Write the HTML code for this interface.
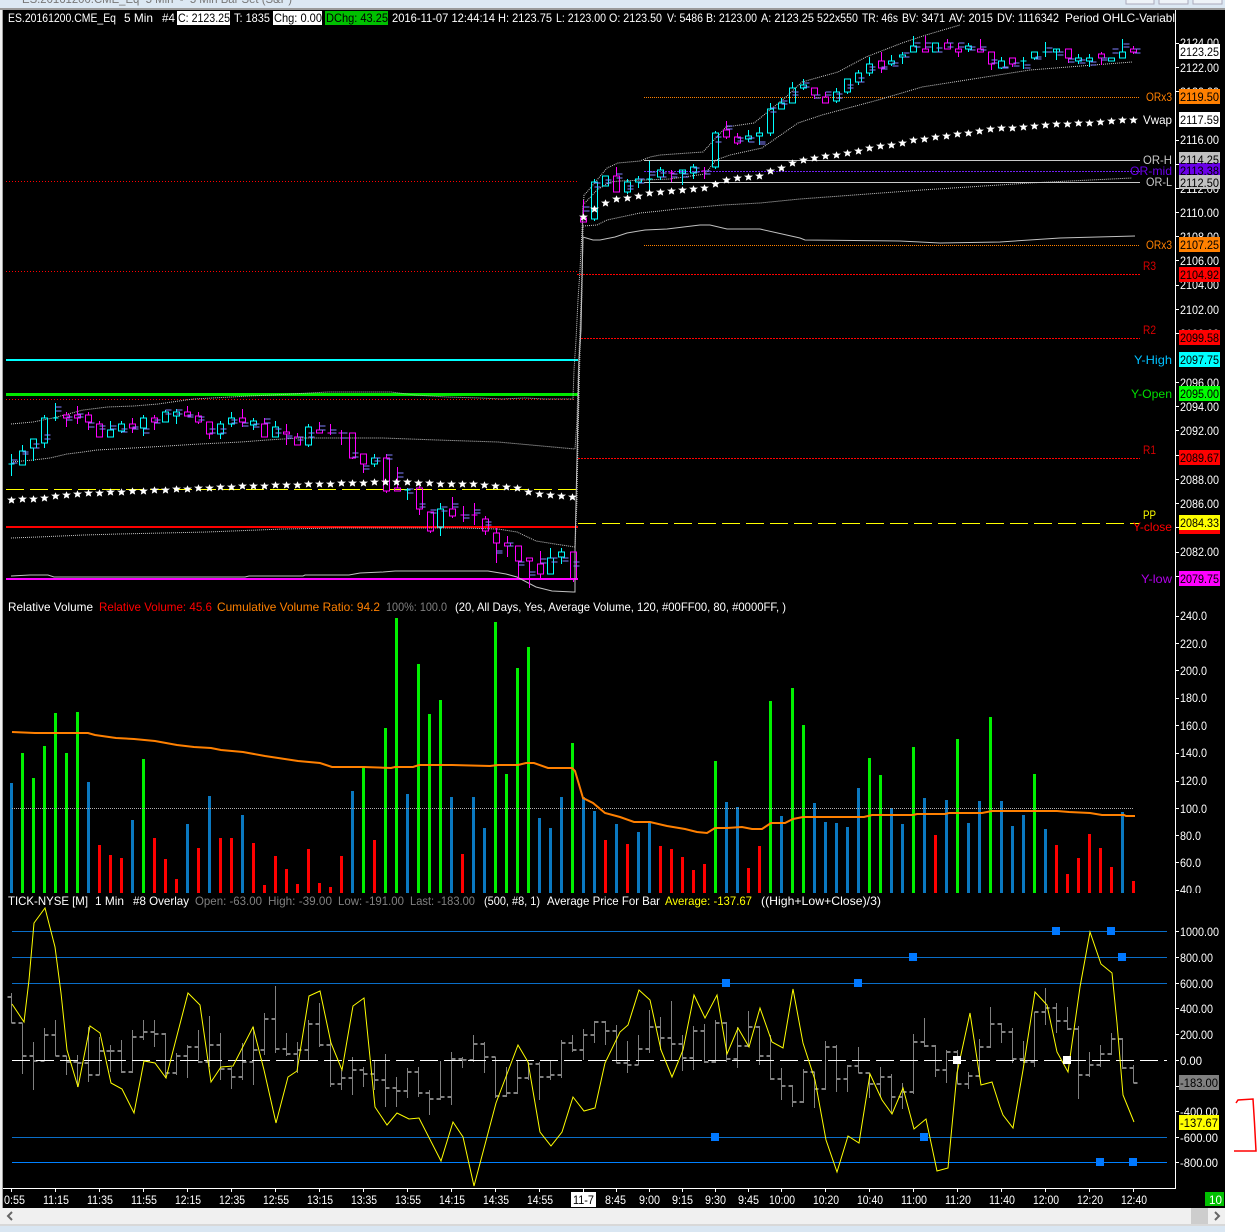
<!DOCTYPE html>
<html><head><meta charset="utf-8"><title>ES chart</title>
<style>
html,body{margin:0;padding:0;background:#fff;width:1257px;height:1232px;overflow:hidden}
svg{display:block}
text{font-family:"Liberation Sans",sans-serif;font-size:12px;fill:#fff;white-space:pre}
.k text,text.k{fill:#000}
</style></head><body>
<svg width="1257" height="1232" viewBox="0 0 1257 1232" xmlns="http://www.w3.org/2000/svg">
<defs>
<marker id="s" markerUnits="userSpaceOnUse" markerWidth="9" markerHeight="9" refX="5" refY="5" viewBox="0 0 10 10"><path fill="#fff" d="M5 .8L6.200 3.500H10L7.200 5.600L8 9L5 7.300L2 9L2.800 5.600L0 3.500H3.800Z"/></marker>
</defs>
<rect width="1257" height="1232" fill="#fff"/>
<!-- chrome -->
<rect width="1225" height="8" fill="#dce8f3"/>
<rect y="8" width="1225" height="2" fill="#9a9a9a"/>
<text x="22" y="3" style="fill:#777" textLength="270" lengthAdjust="spacingAndGlyphs">ES.20161200.CME_Eq  5 Min  -  5 Min Bar Set (S&amp;P)</text>
<g fill="#eef3f8" stroke="#aab"><rect x="1126" y="-3" width="28" height="7"/><rect x="1159" y="-3" width="29" height="7"/><rect x="1193" y="-3" width="29" height="7"/></g>
<rect x="0" y="10" width="2" height="1198" fill="#f0f0f0"/>
<rect x="2" y="10" width="1" height="1198" fill="#a0a0a0"/>
<rect x="3" y="10" width="1222" height="1198" fill="#000"/>
<rect y="1208" width="1225" height="16" fill="#f0f0f0"/>
<rect y="1224" width="1225" height="2" fill="#d8d8d8"/>
<rect y="1226" width="1225" height="6" fill="#d9e6f2"/>
<rect x="1191" y="1208" width="17" height="16" fill="#cdcdcd"/>
<path d="M12 1212L8 1216L12 1220M1215 1212L1219 1216L1215 1220" fill="none" stroke="#666" stroke-width="2"/>
<path d="M1236 1103L1238 1100L1253 1099L1254.500 1123L1256 1151H1234" fill="none" stroke="#f00" stroke-width="1.500"/>

<!-- header -->
<rect x="177" y="11" width="53" height="14" fill="#fff"/>
<rect x="273" y="11" width="49" height="14" fill="#fff"/>
<rect x="325" y="11" width="63" height="14" fill="#00c000"/>
<text x="8" y="22" textLength="108" lengthAdjust="spacingAndGlyphs">ES.20161200.CME_Eq</text>
<text x="124" y="22" textLength="29" lengthAdjust="spacingAndGlyphs">5 Min</text>
<text x="162" y="22" textLength="13" lengthAdjust="spacingAndGlyphs">#4</text>
<text class="k" x="178" y="22" textLength="52" lengthAdjust="spacingAndGlyphs">C: 2123.25</text>
<text x="234" y="22" textLength="36" lengthAdjust="spacingAndGlyphs">T: 1835</text>
<text class="k" x="274" y="22" textLength="48" lengthAdjust="spacingAndGlyphs">Chg: 0.00</text>
<text class="k" x="326" y="22" textLength="62" lengthAdjust="spacingAndGlyphs">DChg: 43.25</text>
<text x="392" y="22" textLength="103" lengthAdjust="spacingAndGlyphs">2016-11-07 12:44:14</text>
<text x="498" y="22" textLength="54" lengthAdjust="spacingAndGlyphs">H: 2123.75</text>
<text x="556" y="22" textLength="50" lengthAdjust="spacingAndGlyphs">L: 2123.00</text>
<text x="609" y="22" textLength="53" lengthAdjust="spacingAndGlyphs">O: 2123.50</text>
<text x="667" y="22" textLength="36" lengthAdjust="spacingAndGlyphs">V: 5486</text>
<text x="706" y="22" textLength="51" lengthAdjust="spacingAndGlyphs">B: 2123.00</text>
<text x="761" y="22" textLength="53" lengthAdjust="spacingAndGlyphs">A: 2123.25</text>
<text x="817" y="22" textLength="41" lengthAdjust="spacingAndGlyphs">522x550</text>
<text x="862" y="22" textLength="36" lengthAdjust="spacingAndGlyphs">TR: 46s</text>
<text x="902" y="22" textLength="43" lengthAdjust="spacingAndGlyphs">BV: 3471</text>
<text x="949" y="22" textLength="44" lengthAdjust="spacingAndGlyphs">AV: 2015</text>
<text x="997" y="22" textLength="62" lengthAdjust="spacingAndGlyphs">DV: 1116342</text>
<text x="1065" y="22" textLength="110" lengthAdjust="spacingAndGlyphs">Period OHLC-Variabl</text>

<!-- level lines -->
<g fill="none">
<path stroke="#f00" stroke-dasharray="1 2" d="M6 181.500H577M6 271.500H577M6 399.500H575"/>
<path stroke="#f00" stroke-dasharray="2 1" d="M577 274.500H1140M581 338.500H1140M578 458.500H1140"/>
<path stroke="#ff8000" stroke-dasharray="1 1" d="M644 97.500H1140M644 245.500H1140"/>
<path stroke="#7020f0" stroke-dasharray="2 1" d="M644 171.500H1140"/>
<path stroke="#c8c8c8" d="M644 160.500H1140M644 182.500H1140"/>
<path stroke="#00ffff" stroke-width="2" d="M6 360H578"/>
<path stroke="#00e800" stroke-width="3" d="M6 394.500H578"/>
<path stroke="#f00" stroke-width="2" d="M6 527H578"/>
<path stroke="#ff00ff" stroke-width="2" d="M6 579H578"/>
<path stroke="#ffff00" stroke-dasharray="18 6" d="M6 489.500H576M578 523.500H1140"/>
<!-- bands -->
<g stroke="#c8c8c8" stroke-dasharray="1 1">
<polyline points="11,424 33,422 53,418 83,410 107,407 134,406 158,404 186,400 194,399 249,396 273,395 328,392 391,392 415,395 447,397 480,398 502,399 525,398 545,399 573,399 574,370 576,340 578,300 580,270 582,230 584,195 587,192 597,180 607,168 618,163 640,161 650,157 660,155 703,152 714,140 726,127 754,123 770,110 786,97 802,82 838,72 866,57 902,43 926,35 960,25"/>
<polyline points="11,462 33,460 50,458 67,454 83,452 97,450 133,448 150,447 167,446 200,444 241,442 267,440 300,438 314,438 383,438 437,440 498,442 575,449 577,420 578,380 580,330 582,270 583,205 597,190 610,182 620,181 645,180 670,179 705,174 716,160 730,155 762,148 798,123 822,115 878,100 922,87 1030,70 1132,62"/>
<polyline points="11,538 38,537 84,535 119,534 207,532 283,529 337,528 421,528 460,528 498,529 517,532 536,541 555,544 575,547 577,500 578,440 580,350 582,290 583,226 597,225 607,220 640,213 660,211 677,209 723,205 760,203 800,199 922,190 1030,183 1070,181 1132,178"/>
</g>
<polyline stroke="#c0c0c0" points="11,576 30,575 48,575 54,577 245,577 249,576 303,576 305,575 349,575 360,573 383,572 395,571 488,571 506,574 517,577 536,587 552,591 573,592 575,592 575,550 578,410 579,360 581,330 582,280 583,237 593,240 600,240 615,237 627,233 645,230 667,229 700,225 710,225 727,229 760,229 800,238 805,240 900,241 940,243 1000,242 1060,238 1135,236"/>
</g>

<!-- candles -->
<g fill="none" shape-rendering="crispEdges">
<path stroke="#00ffff" d="M11.500 454V476M8.500 464h6M22.500 445V451M19.500 451h6V465h-6zM30.500 439h6V448h-6zM33.500 448V461M44.500 415V418M41.500 418h6V443h-6zM44.500 443V448M55.500 403V421M52.500 418h6M110.500 421V430M107.500 430h6V437h-6zM121.500 421V424M118.500 424h6V431h-6zM121.500 431V433M143.500 415V418M140.500 418h6V428h-6zM143.500 428V436M165.500 410V412M162.500 412h6V422h-6zM176.500 409V412M173.500 412h6V416h-6zM176.500 416V424M220.500 421V424M217.500 424h6V434h-6zM220.500 434V439M231.500 412V418M228.500 418h6V424h-6zM231.500 424V427M253.500 418V421M250.500 421h6V425h-6zM253.500 425V430M275.500 421V427M272.500 427h6V437h-6zM308.500 424V427M305.500 427h6V445h-6zM308.500 445V447M374.500 454V458M371.500 458h6V464h-6zM374.500 464V467M407.500 488V500M404.500 490h6M440.500 503V509M437.500 509h6V527h-6zM440.500 527V536M550.500 548V558M547.500 558h6V574h-6zM561.500 548V552M558.500 552h6V557h-6zM561.500 557V564M594.500 179V182M591.500 182h6V219h-6zM594.500 219V221M602.500 176h6V186h-6zM627.500 179V182M624.500 182h6V192h-6zM627.500 192V194M638.500 176V179M635.500 179h6V182h-6zM638.500 182V188M649.500 161V191M646.500 179h6M660.500 167V170M657.500 170h6V177h-6zM660.500 177V180M682.500 170V185M679.500 170h6V173h-6zM693.500 164V167M690.500 167h6V173h-6zM693.500 173V179M715.500 131V133M712.500 133h6V167h-6zM715.500 167V169M748.500 130V136M745.500 136h6V139h-6zM748.500 139V142M759.500 127V133M756.500 133h6V136h-6zM759.500 136V145M770.500 103V109M767.500 109h6V133h-6zM770.500 133V136M781.500 98V103M778.500 103h6V109h-6zM792.500 82V88M789.500 88h6V103h-6zM803.500 79V85M800.500 85h6V88h-6zM803.500 88V90M836.500 88V92M833.500 92h6V101h-6zM836.500 101V103M844.500 79h6V92h-6zM847.500 92V94M858.500 70V73M855.500 73h6V82h-6zM858.500 82V85M869.500 57V64M866.500 64h6V73h-6zM869.500 73V76M891.500 55V61M888.500 61h6V64h-6zM891.500 64V66M902.500 52V55M899.500 55h6V57h-6zM902.500 57V64M913.500 36V46M910.500 46h6V52h-6zM932.500 43h6V52h-6zM968.500 43V46M965.500 46h6V49h-6zM968.500 49V52M1001.500 57V61M998.500 61h6V68h-6zM1001.500 68V69M1023.500 57V69M1020.500 61h6M1031.500 52h6V58h-6zM1034.500 58V60M1045.500 42V57M1042.500 52h6M1056.500 49V60M1053.500 49h6V52h-6zM1078.500 54V58M1075.500 58h6V61h-6zM1078.500 61V64M1089.500 54V58M1086.500 58h6V61h-6zM1089.500 61V67M1108.500 58h6V61h-6zM1122.500 39V52M1119.500 52h6V58h-6z"/>
<path stroke="#ff00ff" d="M66.500 412V415M63.500 415h6V418h-6zM66.500 418V427M77.500 406V415M74.500 415h6V418h-6zM77.500 418V424M88.500 412V415M85.500 415h6V422h-6zM88.500 422V430M99.500 421V424M96.500 424h6V437h-6zM132.500 418V424M129.500 424h6V428h-6zM132.500 428V433M154.500 415V418M151.500 418h6V422h-6zM154.500 422V430M187.500 406V412M184.500 412h6V416h-6zM198.500 412V416M195.500 416h6V422h-6zM198.500 422V424M206.500 422h6V434h-6zM209.500 434V439M242.500 409V418M239.500 418h6V422h-6zM242.500 422V427M264.500 418V424M261.500 424h6V437h-6zM286.500 424V432M283.500 432h6V434h-6zM286.500 434V445M297.500 433V437M294.500 437h6V445h-6zM319.500 422V430M316.500 430h6V433h-6zM330.500 424V435M327.500 433h6M341.500 430V445M338.500 433h6M349.500 433h6V458h-6zM352.500 458V459M360.500 454h6V464h-6zM363.500 464V473M386.500 454V458M383.500 458h6V491h-6zM386.500 491V493M397.500 467V488M394.500 488h6V491h-6zM419.500 486V488M416.500 488h6V509h-6zM419.500 509V515M427.500 512h6V531h-6zM430.500 531V533M452.500 497V509M449.500 509h6V516h-6zM452.500 516V518M463.500 506V522M460.500 515h6M474.500 503V525M471.500 515h6M485.500 516V519M482.500 519h6V531h-6zM485.500 531V535M496.500 528V533M493.500 533h6V543h-6zM496.500 543V563M507.500 536V543M504.500 543h6V546h-6zM507.500 546V557M515.500 546h6V561h-6zM518.500 561V578M526.500 558h6V561h-6zM529.500 561V588M540.500 551V564M537.500 564h6V574h-6zM540.500 574V578M570.500 552h6V579h-6zM573.500 579V582M583.500 200V218M580.500 218h6V222h-6zM613.500 176h6V192h-6zM616.500 167V176M671.500 170V182M668.500 173h6M704.500 167V179M701.500 171h6M726.500 121V130M723.500 130h6V137h-6zM726.500 137V139M737.500 133V137M734.500 137h6V143h-6zM737.500 143V145M811.500 88h6V95h-6zM814.500 95V99M825.500 92V97M822.500 97h6V103h-6zM878.500 61h6V68h-6zM881.500 52V61M881.500 68V73M922.500 49h6V52h-6zM925.500 36V49M944.500 43h6V49h-6zM947.500 39V43M955.500 49h6V52h-6zM958.500 43V49M958.500 52V57M977.500 49h6V52h-6zM980.500 39V49M988.500 52h6V64h-6zM991.500 64V70M1009.500 58h6V64h-6zM1012.500 64V67M1065.500 49h6V58h-6zM1068.500 58V63M1098.500 54h6V58h-6zM1101.500 52V54M1101.500 58V65M1130.500 49h6V52h-6zM1133.500 46V49M1133.500 52V54"/>
<path stroke="#8080ff" d="M11.500 460h6M11.500 463h6M22.500 452h6M22.500 454h6M33.500 444h6M33.500 448h6M44.500 435h6M44.500 439h6M55.500 407h6M55.500 411h6M66.500 417h6M66.500 420h6M77.500 414h6M77.500 417h6M88.500 423h6M88.500 427h6M99.500 426h6M99.500 429h6M110.500 426h6M110.500 429h6M121.500 429h6M121.500 432h6M132.500 427h6M132.500 429h6M143.500 429h6M143.500 433h6M154.500 420h6M154.500 423h6M165.500 410h6M165.500 414h6M176.500 410h6M176.500 414h6M187.500 415h6M187.500 417h6M198.500 417h6M198.500 420h6M209.500 429h6M209.500 433h6M220.500 429h6M220.500 433h6M231.500 420h6M231.500 423h6M242.500 423h6M242.500 426h6M253.500 424h6M253.500 427h6M264.500 419h6M264.500 423h6M275.500 429h6M275.500 433h6M286.500 436h6M286.500 438h6M297.500 437h6M297.500 440h6M308.500 433h6M308.500 437h6M319.500 426h6M319.500 430h6M330.500 430h6M330.500 433h6M341.500 433h6M341.500 438h6M352.500 453h6M352.500 457h6M363.500 466h6M363.500 469h6M374.500 458h6M374.500 461h6M386.500 455h6M386.500 459h6M397.500 473h6M397.500 477h6M407.500 489h6M407.500 493h6M419.500 504h6M419.500 507h6M430.500 510h6M430.500 513h6M441.500 507h6M441.500 511h6M452.500 504h6M452.500 507h6M463.500 515h6M463.500 518h6M474.500 510h6M474.500 513h6M485.500 522h6M485.500 525h6M496.500 551h6M496.500 553h6M507.500 543h6M507.500 546h6M518.500 562h6M518.500 565h6M529.500 572h6M529.500 575h6M540.500 559h6M540.500 563h6M551.500 558h6M551.500 562h6M562.500 558h6M562.500 561h6M573.500 562h6M573.500 566h6M583.500 207h6M583.500 211h6M594.500 183h6M594.500 187h6M605.500 180h6M605.500 183h6M616.500 174h6M616.500 178h6M627.500 186h6M627.500 189h6M638.500 179h6M638.500 183h6M649.500 172h6M649.500 175h6M660.500 173h6M660.500 177h6M671.500 174h6M671.500 177h6M682.500 174h6M682.500 177h6M693.500 168h6M693.500 172h6M704.500 171h6M704.500 174h6M715.500 137h6M715.500 142h6M726.500 126h6M726.500 129h6M737.500 138h6M737.500 141h6M748.500 138h6M748.500 142h6M759.500 142h6M759.500 144h6M770.500 108h6M770.500 112h6M781.500 101h6M781.500 104h6M792.500 92h6M792.500 95h6M803.500 83h6M803.500 87h6M814.500 95h6M814.500 98h6M825.500 92h6M825.500 95h6M836.500 94h6M836.500 98h6M847.500 85h6M847.500 88h6M858.500 78h6M858.500 82h6M869.500 67h6M869.500 70h6M881.500 67h6M881.500 69h6M892.500 63h6M892.500 66h6M903.500 53h6M903.500 57h6M914.500 43h6M914.500 47h6M925.500 43h6M925.500 47h6M936.500 48h6M936.500 52h6M947.500 43h6M947.500 47h6M958.500 43h6M958.500 47h6M969.500 47h6M969.500 50h6M980.500 47h6M980.500 50h6M991.500 60h6M991.500 63h6M1002.500 67h6M1002.500 68h6M1013.500 63h6M1013.500 66h6M1024.500 65h6M1024.500 68h6M1035.500 57h6M1035.500 59h6M1046.500 48h6M1046.500 52h6M1057.500 52h6M1057.500 55h6M1068.500 59h6M1068.500 62h6M1079.500 60h6M1079.500 63h6M1090.500 62h6M1090.500 65h6M1101.500 58h6M1101.500 60h6M1112.500 49h6M1112.500 53h6M1123.500 44h6M1123.500 47h6M1134.500 49h6M1134.500 53h6"/>
</g>
<!-- vwap stars -->
<polyline fill="none" marker-start="url(#s)" marker-mid="url(#s)" marker-end="url(#s)" points="11.500,500 22.500,499 33.500,499 44.500,498 55.500,496 66.500,495 77.500,494 88.500,493 99.500,493 110.500,492 121.500,492 132.500,491 143.500,491 154.500,490 165.500,490 176.500,489 187.500,489 198.500,488 209.500,488 220.500,487 231.500,487 242.500,486 253.500,486 264.500,486 275.500,485 286.500,485 297.500,485 308.500,484 319.500,484 330.500,484 341.500,483 352.500,483 363.500,483 374.500,482 385.500,482 396.500,482 407.500,482 418.500,483 429.500,483 440.500,484 451.500,484 462.500,484 473.500,484 484.500,485 495.500,486 506.500,487 517.500,488 528.500,492 539.500,494 550.500,495 561.500,496 572.500,497"/>
<polyline fill="none" marker-start="url(#s)" marker-mid="url(#s)" marker-end="url(#s)" points="583.500,217 594.500,209 605.500,203 616.500,199 627.500,198 638.500,196 649.500,193 660.500,192 671.500,191 682.500,190 693.500,189 704.500,188 715.500,184 726.500,180 737.500,178 748.500,177 759.500,176 770.500,171 781.500,168 792.500,163 803.500,160 814.500,158 825.500,156 836.500,155 847.500,153 858.500,151 869.500,148 880.500,146 891.500,145 902.500,143 913.500,140 924.500,139 935.500,137 946.500,136 957.500,134 968.500,133 979.500,131 990.500,129 1001.500,128 1012.500,128 1023.500,127 1034.500,126 1045.500,125 1056.500,124 1067.500,124 1078.500,123 1089.500,123 1100.500,122 1111.500,121 1122.500,120 1133.500,120"/>

<!-- volume -->
<g fill="none" stroke-width="3" shape-rendering="crispEdges">
<path stroke="#0a78c0" d="M11.500 893V783M88.500 893V782M132.500 893V820M187.500 893V824M209.500 893V796M242.500 893V815M352.500 893V791M407.500 893V794M451.500 893V797M473.500 893V797M484.500 893V828M539.500 893V818M550.500 893V828M561.500 893V797M583.500 893V797M594.500 893V811M616.500 893V824M638.500 893V832M649.500 893V822M726.500 893V802M737.500 893V807M781.500 893V816M814.500 893V803M825.500 893V822M836.500 893V823M847.500 893V827M858.500 893V788M891.500 893V808M902.500 893V824M924.500 893V798M946.500 893V800M968.500 893V823M979.500 893V801M1001.500 893V801M1012.500 893V826M1023.500 893V815M1045.500 893V829M1122.500 893V812"/>
<path stroke="#00f000" d="M22.500 893V753M33.500 893V778M44.500 893V746M55.500 893V713M66.500 893V753M77.500 893V712M143.500 893V759M363.500 893V768M385.500 893V728M396.500 893V618M418.500 893V664M429.500 893V714M440.500 893V700M495.500 893V622M506.500 893V774M517.500 893V668M528.500 893V647M572.500 893V743M715.500 893V761M770.500 893V701M792.500 893V688M803.500 893V725M869.500 893V758M880.500 893V775M913.500 893V747M957.500 893V739M990.500 893V717M1034.500 893V774"/>
<path stroke="#f00" d="M99.500 893V845M110.500 893V855M121.500 893V858M154.500 893V838M165.500 893V859M176.500 893V879M198.500 893V848M220.500 893V838M231.500 893V838M253.500 893V843M264.500 893V885M275.500 893V856M286.500 893V869M297.500 893V884M308.500 893V849M319.500 893V883M330.500 893V887M341.500 893V856M374.500 893V840M462.500 893V854M605.500 893V840M627.500 893V844M660.500 893V846M671.500 893V849M682.500 893V857M693.500 893V870M704.500 893V864M748.500 893V868M759.500 893V846M935.500 893V835M1056.500 893V845M1067.500 893V874M1078.500 893V858M1089.500 893V834M1100.500 893V848M1111.500 893V867M1133.500 893V881"/>
</g>
<path d="M12 808.500H1134" stroke="#b0b0b0" stroke-dasharray="1 1" fill="none"/>
<polyline fill="none" stroke="#ff8000" stroke-width="2" points="12,732 35,733 88,733 95,735 116,738 134,739 155,741 177,745 194,747 211,748 221,750 243,752 265,756 298,761 320,763 332,767 364,767 391,768 395,767 413,767 419,765 452,765 490,766 498,765 518,765 526,763 534,763 548,768 572,768 575,771 583,798 593,803 605,813 620,817 634,822 650,822 667,826 685,829 697,832 707,833 715,828 727,828 742,827 752,829 762,829 771,823 785,823 793,819 803,817 864,817 872,815 913,815 917,814 945,814 949,813 982,813 992,811 1057,811 1069,812 1090,813 1102,815 1124,815 1126,816 1135,816"/>

<!-- TICK panel -->
<g fill="none">
<path stroke="#0a6ec8" d="M12 931.500H1167M12 957.500H1167M12 983.500H1167M12 1137.500H1167"/>
<path stroke="#0080ff" d="M12 1162.500H1167"/>
<g shape-rendering="crispEdges">
<path stroke="#808080" d="M11.500 993V1023M22.500 1023V1074M33.500 1042V1090M44.500 1028V1061M55.500 1020V1056M66.500 1056V1075M77.500 1055V1087M88.500 1027V1082M99.500 1037V1075M110.500 1045V1072M121.500 1040V1073M132.500 1030V1073M143.500 1020V1040M154.500 1020V1047M165.500 1033V1078M176.500 1053V1075M187.500 1045V1078M198.500 1030V1063M209.500 1016V1067M220.500 1033V1080M231.500 1067V1089M242.500 1043V1080M253.500 1027V1085M264.500 1013V1055M275.500 986V1053M286.500 1033V1056M297.500 1042V1073M308.500 1020V1060M319.500 1003V1047M330.500 1040V1087M341.500 1070V1090M352.500 1057V1095M363.500 1067V1087M374.500 1060V1090M385.500 1054V1107M396.500 1077V1107M407.500 1068V1098M418.500 1067V1097M429.500 1090V1115M440.500 1061V1100M451.500 1052V1105M462.500 1057V1068M473.500 1035V1062M484.500 1042V1073M495.500 1057V1098M506.500 1067V1097M517.500 1060V1094M528.500 1062V1080M539.500 1062V1100M550.500 1060V1080M561.500 1040V1078M572.500 1035V1052M583.500 1029V1060M594.500 1021V1043M605.500 1021V1045M616.500 1025V1063M627.500 1041V1073M638.500 1035V1065M649.500 1010V1053M660.500 1017V1050M671.500 1001V1060M682.500 1035V1071M693.500 1026V1070M704.500 1024V1063M715.500 1020V1063M726.500 1022V1062M737.500 1027V1068M748.500 1011V1047M759.500 1026V1065M770.500 1035V1080M781.500 1068V1100M792.500 1085V1107M803.500 1069V1103M814.500 1072V1108M825.500 1041V1090M836.500 1045V1092M847.500 1065V1092M858.500 1047V1073M869.500 1073V1098M880.500 1067V1097M891.500 1074V1113M902.500 1083V1109M913.500 1034V1094M924.500 1018V1047M935.500 1045V1077M946.500 1050V1083M957.500 1050V1084M968.500 1072V1089M979.500 1039V1077M990.500 1007V1048M1001.500 1023V1043M1012.500 1028V1063M1023.500 1041V1063M1034.500 1012V1067M1045.500 988V1025M1056.500 1003V1033M1067.500 1007V1030M1078.500 1026V1099M1089.500 1052V1077M1100.500 1045V1067M1111.500 1033V1055M1122.500 1038V1069M1133.500 1065V1083"/>
<path stroke="#808080" stroke-width="2" d="M7.500 997h4M11.500 1023h4m3 0h4M22.500 1056h4m3 0h4M33.500 1061h4m3 0h4M44.500 1035h4m3 0h4M55.500 1056h4m3 0h4M66.500 1062h4m3 0h4M77.500 1063h4m3 0h4M88.500 1075h4m3 0h4M99.500 1051h4m3 0h4M110.500 1051h4m3 0h4M121.500 1072h4m3 0h4M132.500 1037h4m3 0h4M143.500 1032h4m3 0h4M154.500 1034h4m3 0h4M165.500 1073h4m3 0h4M176.500 1056h4m3 0h4M187.500 1047h4m3 0h4M198.500 1062h4m3 0h4M209.500 1045h4m3 0h4M220.500 1069h4m3 0h4M231.500 1077h4m3 0h4M242.500 1062h4m3 0h4M253.500 1050h4m3 0h4M264.500 1019h4m3 0h4M275.500 1049h4m3 0h4M286.500 1054h4m3 0h4M297.500 1050h4m3 0h4M308.500 1024h4m3 0h4M319.500 1045h4m3 0h4M330.500 1084h4m3 0h4M341.500 1078h4m3 0h4M352.500 1070h4m3 0h4M363.500 1074h4m3 0h4M374.500 1080h4m3 0h4M385.500 1088h4m3 0h4M396.500 1091h4m3 0h4M407.500 1072h4m3 0h4M418.500 1093h4m3 0h4M429.500 1099h4m3 0h4M440.500 1097h4m3 0h4M451.500 1059h4m3 0h4M462.500 1060h4m3 0h4M473.500 1044h4m3 0h4M484.500 1057h4m3 0h4M495.500 1096h4m3 0h4M506.500 1093h4m3 0h4M517.500 1078h4m3 0h4M528.500 1064h4m3 0h4M539.500 1077h4m3 0h4M550.500 1075h4m3 0h4M561.500 1043h4m3 0h4M572.500 1050h4m3 0h4M583.500 1035h4m3 0h4M594.500 1022h4m3 0h4M605.500 1031h4m3 0h4M616.500 1063h4m3 0h4M627.500 1065h4m3 0h4M638.500 1049h4m3 0h4M649.500 1027h4m3 0h4M660.500 1038h4m3 0h4M671.500 1044h4m3 0h4M682.500 1058h4m3 0h4M693.500 1031h4m3 0h4M704.500 1062h4m3 0h4M715.500 1023h4m3 0h4M726.500 1059h4m3 0h4M737.500 1046h4m3 0h4M748.500 1027h4m3 0h4M759.500 1056h4m3 0h4M770.500 1079h4m3 0h4M781.500 1086h4m3 0h4M792.500 1102h4m3 0h4M803.500 1072h4m3 0h4M814.500 1089h4m3 0h4M825.500 1047h4m3 0h4M836.500 1079h4m3 0h4M847.500 1066h4m3 0h4M858.500 1073h4m3 0h4M869.500 1084h4m3 0h4M880.500 1077h4m3 0h4M891.500 1097h4m3 0h4M902.500 1092h4m3 0h4M913.500 1042h4m3 0h4M924.500 1046h4m3 0h4M935.500 1070h4m3 0h4M946.500 1052h4m3 0h4M957.500 1084h4m3 0h4M968.500 1076h4m3 0h4M979.500 1047h4m3 0h4M990.500 1024h4m3 0h4M1001.500 1032h4m3 0h4M1012.500 1059h4m3 0h4M1023.500 1062h4m3 0h4M1034.500 1012h4m3 0h4M1045.500 1008h4m3 0h4M1056.500 1021h4m3 0h4M1067.500 1029h4m3 0h4M1078.500 1075h4m3 0h4M1089.500 1065h4m3 0h4M1100.500 1054h4m3 0h4M1111.500 1039h4m3 0h4M1122.500 1068h4m3 0h4M1133.500 1083h4"/>
</g>
<path stroke="#fff" stroke-dasharray="18 6" d="M12 1060.500H1167"/>
<polyline stroke="#ffff00" points="12,1004 24,1022 29,980 34,923 45,908 55,947 61,993 67,1050 78,1087 90,1026 100,1033 111,1083 122,1089 134,1113 144,1061 155,1063 166,1078 188,993 200,1005 211,1082 221,1067 233,1066 253,1027 264,1070 276,1123 288,1077 297,1071 309,996 320,991 331,1043 342,1070 353,1006 364,998 375,1107 387,1125 397,1113 409,1119 419,1118 441,1161 453,1122 463,1137 474,1186 496,1103 518,1045 528,1062 540,1132 551,1146 562,1132 573,1097 584,1111 595,1108 605,1063 620,1032 628,1025 639,990 650,1000 661,1050 672,1077 683,1050 694,995 705,1018 717,995 727,1054 738,1028 749,1047 760,1008 772,1042 783,1048 793,989 803,1043 815,1080 826,1140 837,1172 848,1136 859,1143 870,1074 882,1100 892,1114 903,1088 914,1129 926,1119 937,1171 948,1168 957,1073 970,1013 981,1085 992,1082 1000,1107 1003,1115 1013,1128 1023,1070 1035,992 1047,1005 1057,1052 1068,1072 1080,987 1090,932 1101,964 1112,973 1117,1023 1123,1095 1134,1122"/>
</g>
<g fill="#0078ff"><rect x="1052" y="927" width="8" height="8"/><rect x="1107" y="927" width="8" height="8"/><rect x="1118" y="953" width="8" height="8"/><rect x="909" y="953" width="8" height="8"/><rect x="722" y="979" width="8" height="8"/><rect x="854" y="979" width="8" height="8"/><rect x="711" y="1133" width="8" height="8"/><rect x="920" y="1133" width="8" height="8"/><rect x="1096" y="1158" width="8" height="8"/><rect x="1129" y="1158" width="8" height="8"/></g>
<g fill="#fff"><rect x="953" y="1056" width="8" height="8"/><rect x="1063" y="1056" width="8" height="8"/></g>

<!-- legends -->
<text x="8" y="611" textLength="85" lengthAdjust="spacingAndGlyphs">Relative Volume</text>
<text x="99" y="611" textLength="113" lengthAdjust="spacingAndGlyphs" style="fill:#f00">Relative Volume: 45.6</text>
<text x="217" y="611" textLength="163" lengthAdjust="spacingAndGlyphs" style="fill:#ff8000">Cumulative Volume Ratio: 94.2</text>
<text x="386" y="611" textLength="61" lengthAdjust="spacingAndGlyphs" style="fill:#808080">100%: 100.0</text>
<text x="455" y="611" textLength="331" lengthAdjust="spacingAndGlyphs">(20, All Days, Yes, Average Volume, 120, #00FF00, 80, #0000FF, )</text>
<text x="8" y="905" textLength="80" lengthAdjust="spacingAndGlyphs">TICK-NYSE [M]</text>
<text x="95" y="905" textLength="29" lengthAdjust="spacingAndGlyphs">1 Min</text>
<text x="133" y="905" textLength="56" lengthAdjust="spacingAndGlyphs">#8 Overlay</text>
<text x="195" y="905" textLength="67" lengthAdjust="spacingAndGlyphs" style="fill:#808080">Open: -63.00</text>
<text x="268" y="905" textLength="64" lengthAdjust="spacingAndGlyphs" style="fill:#808080">High: -39.00</text>
<text x="338" y="905" textLength="66" lengthAdjust="spacingAndGlyphs" style="fill:#808080">Low: -191.00</text>
<text x="410" y="905" textLength="65" lengthAdjust="spacingAndGlyphs" style="fill:#808080">Last: -183.00</text>
<text x="484" y="905" textLength="56" lengthAdjust="spacingAndGlyphs">(500, #8, 1)</text>
<text x="547" y="905" textLength="113" lengthAdjust="spacingAndGlyphs">Average Price For Bar</text>
<text x="665" y="905" textLength="87" lengthAdjust="spacingAndGlyphs" style="fill:#ffff00">Average: -137.67</text>
<text x="761" y="905" textLength="120" lengthAdjust="spacingAndGlyphs">((High+Low+Close)/3)</text>

<!-- axis -->
<path d="M1175.500 10V1188.500H3" fill="none" stroke="#fff"/>
<path fill="none" stroke="#fff" d="M1176 43.500h3M1176 67.500h3M1176 91.500h3M1176 140.500h3M1176 164.500h3M1176 188.500h3M1176 212.500h3M1176 236.500h3M1176 260.500h3M1176 285.500h3M1176 309.500h3M1176 333.500h3M1176 382.500h3M1176 406.500h3M1176 430.500h3M1176 455.500h3M1176 479.500h3M1176 503.500h3M1176 527.500h3M1176 552.500h3M1176 576.500h3M1176 616.500h3M1176 643.500h3M1176 670.500h3M1176 698.500h3M1176 725.500h3M1176 753.500h3M1176 781.500h3M1176 808.500h3M1176 835.500h3M1176 862.500h3M1176 890.500h3M1176 931.500h3M1176 957.500h3M1176 983.500h3M1176 1008.500h3M1176 1034.500h3M1176 1060.500h3M1176 1086.500h3M1176 1111.500h3M1176 1137.500h3M1176 1162.500h3M11.500 1189v3M55.500 1189v3M99.500 1189v3M143.500 1189v3M187.500 1189v3M231.500 1189v3M275.500 1189v3M319.500 1189v3M363.500 1189v3M407.500 1189v3M451.500 1189v3M495.500 1189v3M539.500 1189v3M583.500 1189v3M616.500 1189v3M649.500 1189v3M682.500 1189v3M715.500 1189v3M748.500 1189v3M781.500 1189v3M825.500 1189v3M869.500 1189v3M913.500 1189v3M957.500 1189v3M1001.500 1189v3M1045.500 1189v3M1089.500 1189v3M1133.500 1189v3"/>
<g>
<text x="1180" y="47" textLength="39" lengthAdjust="spacingAndGlyphs">2124.00</text>
<text x="1180" y="72" textLength="39" lengthAdjust="spacingAndGlyphs">2122.00</text>
<text x="1180" y="96" textLength="39" lengthAdjust="spacingAndGlyphs">2120.00</text>
<text x="1180" y="144" textLength="39" lengthAdjust="spacingAndGlyphs">2116.00</text>
<text x="1180" y="193" textLength="39" lengthAdjust="spacingAndGlyphs">2112.00</text>
<text x="1180" y="217" textLength="39" lengthAdjust="spacingAndGlyphs">2110.00</text>
<text x="1180" y="241" textLength="39" lengthAdjust="spacingAndGlyphs">2108.00</text>
<text x="1180" y="265" textLength="39" lengthAdjust="spacingAndGlyphs">2106.00</text>
<text x="1180" y="289" textLength="39" lengthAdjust="spacingAndGlyphs">2104.00</text>
<text x="1180" y="314" textLength="39" lengthAdjust="spacingAndGlyphs">2102.00</text>
<text x="1180" y="338" textLength="39" lengthAdjust="spacingAndGlyphs">2100.00</text>
<text x="1180" y="387" textLength="39" lengthAdjust="spacingAndGlyphs">2096.00</text>
<text x="1180" y="411" textLength="39" lengthAdjust="spacingAndGlyphs">2094.00</text>
<text x="1180" y="435" textLength="39" lengthAdjust="spacingAndGlyphs">2092.00</text>
<text x="1180" y="484" textLength="39" lengthAdjust="spacingAndGlyphs">2088.00</text>
<text x="1180" y="508" textLength="39" lengthAdjust="spacingAndGlyphs">2086.00</text>
<text x="1180" y="556" textLength="39" lengthAdjust="spacingAndGlyphs">2082.00</text>
<text x="1180" y="620" textLength="27" lengthAdjust="spacingAndGlyphs">240.0</text>
<text x="1180" y="648" textLength="27" lengthAdjust="spacingAndGlyphs">220.0</text>
<text x="1180" y="675" textLength="27" lengthAdjust="spacingAndGlyphs">200.0</text>
<text x="1180" y="702" textLength="27" lengthAdjust="spacingAndGlyphs">180.0</text>
<text x="1180" y="730" textLength="27" lengthAdjust="spacingAndGlyphs">160.0</text>
<text x="1180" y="757" textLength="27" lengthAdjust="spacingAndGlyphs">140.0</text>
<text x="1180" y="785" textLength="27" lengthAdjust="spacingAndGlyphs">120.0</text>
<text x="1180" y="813" textLength="27" lengthAdjust="spacingAndGlyphs">100.0</text>
<text x="1180" y="840" textLength="21" lengthAdjust="spacingAndGlyphs">80.0</text>
<text x="1180" y="867" textLength="21" lengthAdjust="spacingAndGlyphs">60.0</text>
<text x="1180" y="894" textLength="21" lengthAdjust="spacingAndGlyphs">40.0</text>
<rect x="1179" y="893" width="40" height="6" fill="#000"/>
<text x="1180" y="936" textLength="39" lengthAdjust="spacingAndGlyphs">1000.00</text>
<text x="1180" y="962" textLength="33" lengthAdjust="spacingAndGlyphs">800.00</text>
<text x="1180" y="988" textLength="33" lengthAdjust="spacingAndGlyphs">600.00</text>
<text x="1180" y="1013" textLength="33" lengthAdjust="spacingAndGlyphs">400.00</text>
<text x="1180" y="1039" textLength="33" lengthAdjust="spacingAndGlyphs">200.00</text>
<text x="1180" y="1065" textLength="22" lengthAdjust="spacingAndGlyphs">0.00</text>
<text x="1180" y="1116" textLength="38" lengthAdjust="spacingAndGlyphs">-400.00</text>
<text x="1180" y="1142" textLength="38" lengthAdjust="spacingAndGlyphs">-600.00</text>
<text x="1180" y="1167" textLength="38" lengthAdjust="spacingAndGlyphs">-800.00</text>
</g>
<!-- boxes -->
<rect x="1179" y="44" width="41" height="15" fill="#fff"/>
<rect x="1179" y="89" width="41" height="15" fill="#ff8000"/>
<rect x="1179" y="112" width="41" height="15" fill="#fff"/>
<rect x="1179" y="152" width="41" height="15" fill="#c0c0c0"/>
<rect x="1179" y="163" width="41" height="12" fill="#6a00e8"/>
<rect x="1179" y="175" width="41" height="14" fill="#c0c0c0"/>
<rect x="1179" y="237" width="41" height="15" fill="#ff8000"/>
<rect x="1179" y="267" width="41" height="15" fill="#f00"/>
<rect x="1179" y="330" width="41" height="15" fill="#f00"/>
<rect x="1179" y="352" width="41" height="15" fill="#00ffff"/>
<rect x="1179" y="386" width="41" height="15" fill="#00ff00"/>
<rect x="1179" y="450" width="41" height="15" fill="#f00"/>
<rect x="1179" y="530" width="41" height="4" fill="#f00"/>
<rect x="1179" y="515" width="41" height="15" fill="#ff0"/>
<rect x="1179" y="571" width="41" height="15" fill="#f0f"/>
<rect x="1179" y="1075" width="40" height="15" fill="#808080"/>
<rect x="1179" y="1115" width="40" height="15" fill="#ff0"/>
<g class="k">
<text x="1180" y="56" textLength="39" lengthAdjust="spacingAndGlyphs">2123.25</text>
<text x="1180" y="101" textLength="39" lengthAdjust="spacingAndGlyphs">2119.50</text>
<text x="1180" y="124" textLength="39" lengthAdjust="spacingAndGlyphs">2117.59</text>
<text x="1180" y="164" textLength="39" lengthAdjust="spacingAndGlyphs">2114.25</text>
<text x="1180" y="175" textLength="39" lengthAdjust="spacingAndGlyphs">2113.38</text>
<text x="1180" y="187" textLength="39" lengthAdjust="spacingAndGlyphs">2112.50</text>
<text x="1180" y="249" textLength="39" lengthAdjust="spacingAndGlyphs">2107.25</text>
<text x="1180" y="279" textLength="39" lengthAdjust="spacingAndGlyphs">2104.92</text>
<text x="1180" y="342" textLength="39" lengthAdjust="spacingAndGlyphs">2099.58</text>
<text x="1180" y="364" textLength="39" lengthAdjust="spacingAndGlyphs">2097.75</text>
<text x="1180" y="398" textLength="39" lengthAdjust="spacingAndGlyphs">2095.00</text>
<text x="1180" y="462" textLength="39" lengthAdjust="spacingAndGlyphs">2089.67</text>
<text x="1180" y="527" textLength="39" lengthAdjust="spacingAndGlyphs">2084.33</text>
<text x="1180" y="583" textLength="39" lengthAdjust="spacingAndGlyphs">2079.75</text>
<text x="1180" y="1087" textLength="38" lengthAdjust="spacingAndGlyphs">-183.00</text>
<text x="1180" y="1127" textLength="38" lengthAdjust="spacingAndGlyphs">-137.67</text>
</g>
<!-- level labels -->
<text x="1146" y="101" textLength="26" lengthAdjust="spacingAndGlyphs" style="fill:#ff8000">ORx3</text>
<text x="1143" y="124" textLength="29" lengthAdjust="spacingAndGlyphs">Vwap</text>
<text x="1143" y="164" textLength="29" lengthAdjust="spacingAndGlyphs" style="fill:#c8c8c8">OR-H</text>
<text x="1130" y="175" textLength="42" lengthAdjust="spacingAndGlyphs" style="fill:#6a00e8">OR-mid</text>
<text x="1146" y="186" textLength="26" lengthAdjust="spacingAndGlyphs" style="fill:#c8c8c8">OR-L</text>
<text x="1146" y="249" textLength="26" lengthAdjust="spacingAndGlyphs" style="fill:#ff8000">ORx3</text>
<text x="1143" y="270" textLength="13" lengthAdjust="spacingAndGlyphs" style="fill:#d80000">R3</text>
<text x="1143" y="334" textLength="13" lengthAdjust="spacingAndGlyphs" style="fill:#d80000">R2</text>
<text x="1134" y="364" textLength="38" lengthAdjust="spacingAndGlyphs" style="fill:#00c0ff">Y-High</text>
<text x="1131" y="398" textLength="41" lengthAdjust="spacingAndGlyphs" style="fill:#00e000">Y-Open</text>
<text x="1143" y="454" textLength="13" lengthAdjust="spacingAndGlyphs" style="fill:#d80000">R1</text>
<text x="1143" y="519" textLength="13" lengthAdjust="spacingAndGlyphs" style="fill:#ffff00">PP</text>
<text x="1133" y="531" textLength="39" lengthAdjust="spacingAndGlyphs" style="fill:#f00">Y-close</text>
<text x="1141" y="583" textLength="31" lengthAdjust="spacingAndGlyphs" style="fill:#b000e8">Y-low</text>
<!-- time axis -->
<rect x="571" y="1192" width="25" height="15" fill="#fff"/>
<rect x="1205" y="1192" width="19" height="14" fill="#00c000"/>
<text x="1209" y="1204" textLength="13" lengthAdjust="spacingAndGlyphs">10</text>
<text x="4" y="1204" textLength="21" lengthAdjust="spacingAndGlyphs">0:55</text>
<text x="43" y="1204" textLength="26" lengthAdjust="spacingAndGlyphs">11:15</text>
<text x="87" y="1204" textLength="26" lengthAdjust="spacingAndGlyphs">11:35</text>
<text x="131" y="1204" textLength="26" lengthAdjust="spacingAndGlyphs">11:55</text>
<text x="175" y="1204" textLength="26" lengthAdjust="spacingAndGlyphs">12:15</text>
<text x="219" y="1204" textLength="26" lengthAdjust="spacingAndGlyphs">12:35</text>
<text x="263" y="1204" textLength="26" lengthAdjust="spacingAndGlyphs">12:55</text>
<text x="307" y="1204" textLength="26" lengthAdjust="spacingAndGlyphs">13:15</text>
<text x="351" y="1204" textLength="26" lengthAdjust="spacingAndGlyphs">13:35</text>
<text x="395" y="1204" textLength="26" lengthAdjust="spacingAndGlyphs">13:55</text>
<text x="439" y="1204" textLength="26" lengthAdjust="spacingAndGlyphs">14:15</text>
<text x="483" y="1204" textLength="26" lengthAdjust="spacingAndGlyphs">14:35</text>
<text x="527" y="1204" textLength="26" lengthAdjust="spacingAndGlyphs">14:55</text>
<text class="k" x="573" y="1204" textLength="21" lengthAdjust="spacingAndGlyphs">11-7</text>
<text x="605" y="1204" textLength="21" lengthAdjust="spacingAndGlyphs">8:45</text>
<text x="639" y="1204" textLength="21" lengthAdjust="spacingAndGlyphs">9:00</text>
<text x="672" y="1204" textLength="21" lengthAdjust="spacingAndGlyphs">9:15</text>
<text x="705" y="1204" textLength="21" lengthAdjust="spacingAndGlyphs">9:30</text>
<text x="738" y="1204" textLength="21" lengthAdjust="spacingAndGlyphs">9:45</text>
<text x="769" y="1204" textLength="26" lengthAdjust="spacingAndGlyphs">10:00</text>
<text x="813" y="1204" textLength="26" lengthAdjust="spacingAndGlyphs">10:20</text>
<text x="857" y="1204" textLength="26" lengthAdjust="spacingAndGlyphs">10:40</text>
<text x="901" y="1204" textLength="26" lengthAdjust="spacingAndGlyphs">11:00</text>
<text x="945" y="1204" textLength="26" lengthAdjust="spacingAndGlyphs">11:20</text>
<text x="989" y="1204" textLength="26" lengthAdjust="spacingAndGlyphs">11:40</text>
<text x="1033" y="1204" textLength="26" lengthAdjust="spacingAndGlyphs">12:00</text>
<text x="1077" y="1204" textLength="26" lengthAdjust="spacingAndGlyphs">12:20</text>
<text x="1121" y="1204" textLength="26" lengthAdjust="spacingAndGlyphs">12:40</text>
</svg>
</body></html>
